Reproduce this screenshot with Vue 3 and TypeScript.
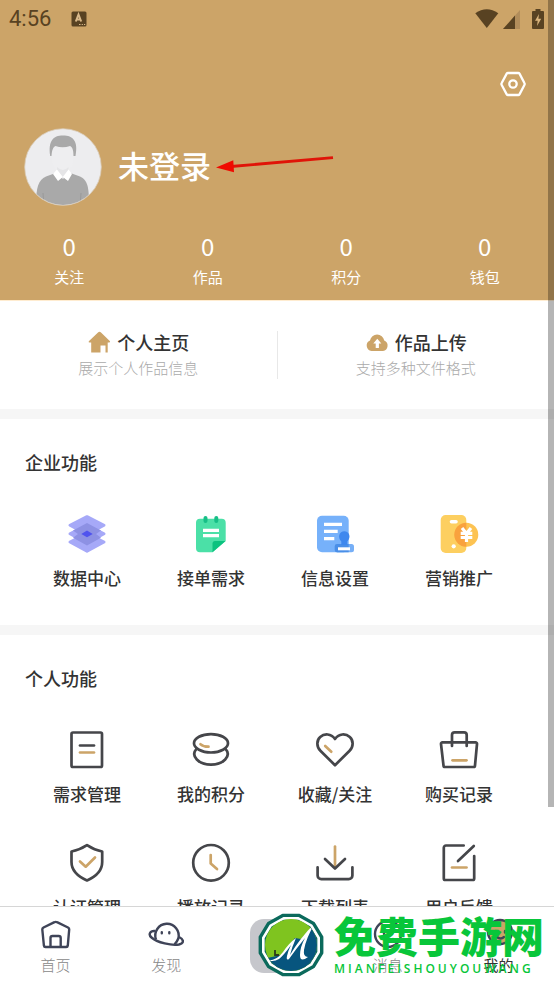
<script setup lang="ts">
interface Stat { value: number; label: string }
interface Shape { d: string; gold?: boolean }
interface Feature { label: string; shapes: Shape[] }

const stats: Stat[] = [
  { value: 0, label: '关注' },
  { value: 0, label: '作品' },
  { value: 0, label: '积分' },
  { value: 0, label: '钱包' },
]

const personal: Feature[] = [
  { label: '需求管理', shapes: [
    { d: 'M6 2.5H33.5a1.5 1.5 0 0 1 1.5 1.5V35.5a1.5 1.5 0 0 1-1.5 1.5H6a1.5 1.5 0 0 1-1.5-1.5V4A1.5 1.5 0 0 1 6 2.5z' },
    { d: 'M13 15.5H27' },
    { d: 'M13 22.5H27', gold: true },
  ] },
  { label: '我的积分', shapes: [
    { d: 'M3 13.3a17 9.2 0 1 0 34 0a17 9.2 0 1 0-34 0z' },
    { d: 'M5.5 18.8C-1 26 8 34.7 20 34.7S41 26 34.5 18.8' },
    { d: 'M9.5 14.2Q12.5 16.8 17.5 16.7', gold: true },
  ] },
  { label: '收藏/关注', shapes: [
    { d: 'M20 35.2L5.4 20.7C1.4 16.6 1.4 10.6 5.2 7.1C9.5 3.2 16 3.5 20 9C24 3.5 30.5 3.2 34.8 7.1C38.6 10.6 38.6 16.6 34.6 20.7z' },
    { d: 'M10.2 16L16.3 21.7', gold: true },
  ] },
  { label: '购买记录', shapes: [
    { d: 'M3.5 12.3H36.5a1.5 1.5 0 0 1 1.5 1.7L36 35.5a1.5 1.5 0 0 1-1.5 1.5H6a1.5 1.5 0 0 1-1.5-1.5L2 14a1.5 1.5 0 0 1 1.5-1.7z' },
    { d: 'M13 16V5a2.7 2.7 0 0 1 2.7-2.7H25A2.7 2.7 0 0 1 27.7 5V16' },
    { d: 'M13.5 30.3H27.5', gold: true },
  ] },
  { label: '认证管理', shapes: [
    { d: 'M20 2.2C15 5.5 10 7.5 4.5 8.5V19C4.5 27 11 33.5 20 37.5C29 33.5 35.2 27 35.2 19V8.5C29.5 7.5 25 5.5 20 2.2z' },
    { d: 'M13 18.5L18.7 23.7L28 14.5', gold: true },
  ] },
  { label: '播放记录', shapes: [
    { d: 'M2.2 19.8a17.8 17.8 0 1 0 35.6 0a17.8 17.8 0 1 0-35.6 0z' },
    { d: 'M19.7 12V20.5L26 26', gold: true },
  ] },
  { label: '下载列表', shapes: [
    { d: 'M20 3.5V24', gold: true },
    { d: 'M10 16L20 25.5L30 16' },
    { d: 'M2.6 24.3V32.5a3.7 3.7 0 0 0 3.7 3.7H33.7a3.7 3.7 0 0 0 3.7-3.7V24.3' },
  ] },
  { label: '用户反馈', shapes: [
    { d: 'M24.7 2.5H7A2.2 2.2 0 0 0 4.8 4.7V35.5A1.5 1.5 0 0 0 6.3 37H33.7A1.5 1.5 0 0 0 35.2 35.5V13' },
    { d: 'M34.8 3L19 18' },
    { d: 'M13 24.5H27.5', gold: true },
  ] },
]

/* Twelve-sided outline used by every ring of the round emblem. */
function ring(radius: number): string {
  return Array.from({ length: 12 }, (_, i) => {
    const a = ((i * 30 + 15) * Math.PI) / 180
    return `${(34 + radius * Math.cos(a)).toFixed(1)},${(33 + radius * 0.96 * Math.sin(a)).toFixed(1)}`
  }).join(' ')
}
</script>

<template>
  <div class="screen">
    <main class="content">
      <header class="hero">
        <div class="status">
          <span class="time">4:56</span>
          <svg class="keyboard" width="16" height="16" viewBox="0 0 16 16" aria-hidden="true">
            <rect x="0.5" y="0.5" width="15" height="15" rx="1.5" fill="#584222" />
            <path d="M4.8 10.5L7.5 3.5L10.2 10.5M5.7 8.5H9.3" fill="none" stroke="#d9b98a" stroke-width="2" />
            <path d="M8 13.5h1.5M10.7 13.5h1.2M13 13.5h1.2" stroke="#d9b98a" stroke-width="1.2" />
          </svg>
          <svg class="signals" width="70" height="22" viewBox="0 0 70 22" aria-hidden="true">
            <path d="M0.3 5.2Q11.7-2.5 23.3 5.2L11.8 20z" fill="#584222" />
            <path d="M45 2V21H28z" fill="#b18d5b" />
            <path d="M40 7.6V21H28z" fill="#584222" />
            <path d="M60.5 1H65.5V3H68a1 1 0 0 1 1 1V20a1 1 0 0 1-1 1H58a1 1 0 0 1-1-1V4a1 1 0 0 1 1-1h2.5z" fill="#584222" />
            <path d="M64 6L60 12.8H62.7L62 18L66.2 10.8H63.4z" fill="#d9b47c" />
          </svg>
        </div>

        <div class="tools">
          <button class="settings" type="button" aria-label="设置">
            <svg width="26" height="26" viewBox="0 0 26 26" fill="none" stroke="#fff" stroke-width="2.3">
              <path d="M8 2H18.2a1.5 1.5 0 0 1 1.3.7L24.4 12a2 2 0 0 1 0 2L19.5 23.3a1.5 1.5 0 0 1-1.3.7H8a1.5 1.5 0 0 1-1.3-.7L1.7 14a2 2 0 0 1 0-2L6.7 2.7A1.5 1.5 0 0 1 8 2z" />
              <circle cx="13" cy="13" r="3.7" />
            </svg>
          </button>
        </div>

        <div class="profile">
          <svg class="avatar" width="78" height="78" viewBox="0 0 78 78" aria-hidden="true">
            <defs><clipPath id="face"><circle cx="39" cy="39" r="38" /></clipPath></defs>
            <circle cx="39" cy="39" r="38.3" fill="#ededef" stroke="#d9cbb8" stroke-width="0.8" />
            <g clip-path="url(#face)">
              <path d="M12 78C12 60 14 52 22 48.5L33 44.5H45L56 48.5C64 52 65 60 65 78z" fill="#a9a9a9" />
              <path d="M20 78L19 65M56 78L57 65" stroke="#8f8f8f" stroke-width="0.6" />
              <path d="M28 22V32C29 42 35 46 38.5 46S48 42 49.5 32V22Q39 15 28 22z" fill="#eeeef0" />
              <path d="M33 39V46L39 51L44.5 46V39Q39 45 33 39z" fill="#e5e5e7" />
              <path d="M33 41.5L38.800 49L34 53L29 46zM44.500 41.500L38.800 49L44 53L48 46z" fill="#fff" />
              <path d="M26.200 28C24 13 29 7.500 39 7.500S54.500 13 51.500 28L49.500 28C49.500 22 48.500 19 46 18Q38.500 20.500 31.500 18C29 19 28 22 27.500 28z" fill="#a9a9a9" />
            </g>
          </svg>
          <button class="name" type="button">未登录</button>
          <svg class="pointer" width="120" height="24" viewBox="0 0 120 24" aria-hidden="true">
            <path d="M15 11.500L117 2.700" stroke="#e01408" stroke-width="2.800" />
            <path d="M0 12.500L17.300 5.300L18 17.200z" fill="#f00a00" />
          </svg>
        </div>

        <ul class="stats">
          <li v-for="s in stats" :key="s.label">
            <strong>{{ s.value }}</strong>
            <span>{{ s.label }}</span>
          </li>
        </ul>
      </header>

      <section class="shortcuts">
        <a class="shortcut" href="#home">
          <span class="shortcut-title">
            <svg width="24" height="24" viewBox="0 0 24 24" aria-hidden="true">
              <path d="M12.500 1.700Q13.300 1.700 14 2.400L23 11.200Q23.400 12.500 22 12.500H20.700V22.500H18.500V15.500H13.500V22.500H4.200V12.500H2.500Q1.200 12.500 1.800 11.200L11 2.400Q11.700 1.700 12.500 1.700z" fill="#cca468" />
            </svg>
            个人主页
          </span>
          <span class="shortcut-note">展示个人作品信息</span>
        </a>
        <a class="shortcut" href="#upload">
          <span class="shortcut-title">
            <svg width="24" height="24" viewBox="0 0 24 24" aria-hidden="true">
              <path d="M6.500 21A5.500 5.500 0 0 1 5 10.500A7.200 7.200 0 0 1 19.200 10.500A5.500 5.500 0 0 1 18 21z" fill="#cca468" />
              <path d="M12.300 8.700L16.300 13.500H13.900V18H10.700V13.500H8.300z" fill="#fff" />
            </svg>
            作品上传
          </span>
          <span class="shortcut-note">支持多种文件格式</span>
        </a>
      </section>

      <section class="panel">
        <h2>企业功能</h2>
        <div class="grid">
          <button type="button">
            <svg width="40" height="40" viewBox="0 0 40 40" aria-hidden="true">
              <g fill="#a6a9f8" stroke="#a6a9f8" stroke-width="3" stroke-linejoin="round">
                <path d="M20 2.700L37 11.300L20 20.500L3 11.300z" />
                <path d="M20 11L37 19.800L20 29L3 19.800z" />
                <path d="M20 19.500L37 28L20 37.200L3 28z" />
              </g>
              <path d="M20 9L34 16.500L29 20L34 23.800L20 31.500L6 23.800L11 20L6 16.500z" fill="#8d91e4" />
              <path d="M20 16.500L25.700 20L20 23.300L14.300 20z" fill="#5053ee" />
            </svg>
            数据中心
          </button>
          <button type="button">
            <svg width="40" height="40" viewBox="0 0 40 40" aria-hidden="true">
              <path d="M9 4.700H30.700a4 4 0 0 1 4 4V27L21.500 38.300H9a4 4 0 0 1-4-4V8.700a4 4 0 0 1 4-4z" fill="#4be0a7" />
              <path d="M34.500 27L21.500 38.300V29.500a2.500 2.500 0 0 1 2.500-2.500z" fill="#0cc27f" />
              <path d="M14.500 4V7M25.300 4V7" stroke="#17bf87" stroke-width="4" stroke-linecap="round" />
              <path d="M12 16.300H28M12 21.700H28" stroke="#fff" stroke-width="3.200" />
            </svg>
            接单需求
          </button>
          <button type="button">
            <svg width="40" height="40" viewBox="0 0 40 40" aria-hidden="true">
              <rect x="2" y="1.700" width="31.700" height="36.600" rx="5" fill="#76b1fa" />
              <path d="M9 10.300H27M9 17.300H22.700M9 24.700H19.300" stroke="#fff" stroke-width="3.200" />
              <rect x="19.700" y="30" width="19.300" height="8.300" rx="2.500" fill="#76aff7" />
              <path d="M22 30H33.700V38.300H22a2.300 2.300 0 0 1-2.300-2.300V32.300A2.300 2.300 0 0 1 22 30z" fill="#4a8fe8" />
              <path d="M26.300 31V27.500C22 23 24.500 17.300 29.300 17.300S36.600 23 32.300 27.500V31z" fill="#3f88ee" />
              <path d="M23 34.800H35" stroke="#fff" stroke-width="3" />
            </svg>
            信息设置
          </button>
          <button type="button">
            <svg width="40" height="40" viewBox="0 0 40 40" aria-hidden="true">
              <defs><clipPath id="phone"><rect x="1.700" y="1" width="25.600" height="38" rx="5" /></clipPath></defs>
              <rect x="1.700" y="1" width="25.600" height="38" rx="5" fill="#fdcf60" />
              <circle cx="27.300" cy="20.700" r="12" fill="#fdc352" />
              <circle cx="27.300" cy="20.700" r="12" fill="#f9a23e" clip-path="url(#phone)" />
              <path d="M12.500 7.700H17" stroke="#fff" stroke-width="3.600" stroke-linecap="round" />
              <circle cx="14.700" cy="32.300" r="2.100" fill="#fff" />
              <path d="M23 14L27.500 19.500L32 14M21.700 19.300H33.300M21.700 23.500H33.300M27.500 19V28" fill="none" stroke="#fff" stroke-width="3.200" />
            </svg>
            营销推广
          </button>
        </div>
      </section>

      <section class="panel">
        <h2>个人功能</h2>
        <div class="grid">
          <button v-for="f in personal" :key="f.label" type="button">
            <svg class="line-icon" width="40" height="40" viewBox="0 0 40 40" aria-hidden="true">
              <path v-for="s in f.shapes" :key="s.d" :d="s.d" :class="{ gold: s.gold }" />
            </svg>
            {{ f.label }}
          </button>
        </div>
      </section>
    </main>

    <div class="scroll-thumb" aria-hidden="true"></div>

    <nav class="tabs">
      <a href="#index">
        <svg class="tab-icon" width="36" height="36" viewBox="0 0 36 36" aria-hidden="true">
          <path d="M17.500 5.200Q18.700 4.500 20 5.200L31 10.500Q32.300 11.200 32.200 12.500L30.800 28.500Q30.600 30 29.200 30H8.500Q7.100 30 6.900 28.500L5.300 12.500Q5.200 11.200 6.500 10.500z" />
          <path d="M13.500 30V21a2 2 0 0 1 2-2H21.700a2 2 0 0 1 2 2V30" />
        </svg>
        首页
      </a>
      <a href="#discover">
        <svg class="tab-icon" width="36" height="36" viewBox="0 0 36 36" aria-hidden="true">
          <path d="M8 22.500A11.700 11.700 0 1 1 30.300 21.500Q29 25 26.500 27.300" />
          <path d="M7 14C2 13.500 0 17.500 3.500 20.500C9 25.500 24 29 31 27.500C36.500 26 36 22.500 31 20" />
          <path d="M13.800 15.200V16.200M21.300 15.200V16.200" stroke-linecap="round" />
        </svg>
        发现
      </a>
      <button class="publish" type="button" aria-label="发布">
        <svg width="54" height="54" viewBox="0 0 54 54" aria-hidden="true" />
      </button>
      <a href="#messages">
        <svg class="tab-icon" width="36" height="36" viewBox="0 0 36 36" aria-hidden="true">
          <circle cx="18" cy="17" r="13" />
          <path d="M14 15V17M22 15V17M13 22Q18 26 23 22" stroke-linecap="round" />
        </svg>
        消息
      </a>
      <a class="active" href="#me" aria-current="page">
        <svg class="tab-icon" width="36" height="36" viewBox="0 0 36 36" aria-hidden="true">
          <circle cx="19" cy="15" r="12" fill="#cca468" />
          <path d="M15 14V15.500M24 14V15.500M16 20Q19.500 23 23 20" stroke-linecap="round" />
        </svg>
        我的
      </a>
    </nav>

    <div class="brand">
      <svg width="68" height="66" viewBox="0 0 68 66" aria-hidden="true">
        <defs><clipPath id="disc"><circle cx="34" cy="33" r="26" /></clipPath></defs>
        <polygon :points="ring(32)" fill="#0b6a5c" stroke="#0b6a5c" stroke-width="3" stroke-linejoin="round" />
        <polygon :points="ring(29)" fill="#fff" stroke="#fff" stroke-width="2" stroke-linejoin="round" />
        <polygon :points="ring(26.5)" fill="#0b6a5c" stroke="#0b6a5c" stroke-width="1.5" stroke-linejoin="round" />
        <g clip-path="url(#disc)">
          <rect width="68" height="66" fill="#7fc41f" />
          <path d="M68 8L58 11L44 27L38 26L24 43L6 47V66H68z" fill="#07557e" />
          <path d="M12 48.500Q20 48 26 40Q32 31 39 26Q35 35 33 43Q43 26 58 11Q49 26 47 38Q46 45 51 45Q43 51 43 43Q43 35 48 26Q39 37 32 47Q29 49 30 44Q31 39 34 33Q27 43 22 47Q17 50 12 48.500z" fill="#fff" />
          <path d="M18 38V43H22" fill="none" stroke="#2c3a1c" stroke-width="1.800" />
        </g>
      </svg>
      <div class="brand-text">
        <strong>免费手游网</strong>
        <span>MIANFEISHOUYOUWANG</span>
      </div>
    </div>
  </div>
</template>

<style>
body {
  background: #fff;
}
</style>

<style scoped>
.screen {
  position: relative;
  display: flex;
  flex-direction: column;
  height: 100vh;
  overflow: hidden;
  background: #fff;
  color: #333;
  font-family: "Noto Sans CJK SC", sans-serif;
}

.screen * {
  box-sizing: border-box;
}

.screen svg {
  display: block;
  flex: none;
}

button {
  padding: 0;
  border: 0;
  background: none;
  color: inherit;
  font: inherit;
  cursor: pointer;
}

a {
  color: inherit;
  text-decoration: none;
}

.content {
  flex: 1;
  min-height: 0;
  overflow-y: auto;
  scrollbar-width: none;
}

.hero {
  padding-bottom: 12px;
  background: #cca468;
  color: #fff;
}

.status {
  display: flex;
  align-items: center;
  height: 38px;
  padding: 0 9px;
  color: #584222;
}

.time {
  font: 400 22px/24px Roboto, sans-serif;
}

.keyboard {
  margin-left: 20px;
}

.signals {
  margin-left: auto;
}

.tools {
  display: flex;
  justify-content: flex-end;
  padding: 33px 28px 31px;
}

.profile {
  display: flex;
  align-items: center;
  padding: 0 24px;
}

.name {
  margin: 0 5px 0 16px;
  padding-bottom: 4px;
  font-size: 31px;
  font-weight: 500;
  line-height: 40px;
}

.stats {
  display: grid;
  grid-template-columns: repeat(4, 1fr);
  margin: 26px 0 0;
  padding: 0;
  list-style: none;
  text-align: center;
}

.stats li {
  display: grid;
  gap: 6px;
}

.stats strong {
  font-size: 24px;
  font-weight: 400;
  line-height: 28px;
}

.stats span {
  font-size: 15px;
  line-height: 22px;
}

.shortcuts {
  display: flex;
  padding: 30px 0;
  border-top: 1px solid #ffecd0;
  border-bottom: 10px solid #f6f6f6;
}

.shortcut {
  display: grid;
  flex: 1;
  gap: 3px;
  justify-items: center;
  align-content: start;
  height: 48px;
}

.shortcut + .shortcut {
  border-left: 1px solid #e8e8e8;
}

.shortcut-title {
  display: flex;
  align-items: center;
  gap: 6px;
  height: 22px;
  font-size: 18px;
  font-weight: 500;
  line-height: 22px;
}

.shortcut-note {
  color: #aaa;
  font-size: 15px;
  font-weight: 300;
  line-height: 24px;
}

.panel {
  padding: 31px 33px 35px 25px;
  border-bottom: 10px solid #f6f6f6;
}

h2 {
  margin: 0 0 40px;
  font-size: 18px;
  font-weight: 500;
  line-height: 24px;
}

.grid {
  display: grid;
  grid-template-columns: repeat(4, 1fr);
  row-gap: 37px;
}

.grid button {
  display: grid;
  justify-items: center;
  gap: 12px;
  font-size: 17px;
  font-weight: 500;
  line-height: 24px;
}

.line-icon {
  fill: none;
  stroke: #45464a;
  stroke-width: 2.7;
  stroke-linecap: round;
  stroke-linejoin: round;
}

.line-icon .gold {
  stroke: #cca468;
}

.scroll-thumb {
  position: absolute;
  top: 0;
  right: 0;
  width: 6px;
  height: 82%;
  background: rgba(0, 0, 0, 0.29);
}

.tabs {
  display: grid;
  grid-template-columns: repeat(5, 1fr);
  padding: 10px 0 8px;
  border-top: 1px solid #d6d6d6;
  background: #fff;
  color: #888;
  font-size: 15px;
  font-weight: 300;
  line-height: 22px;
}

.tabs a {
  display: grid;
  justify-items: center;
  gap: 1px;
}

.tabs .active {
  color: #333;
  font-weight: 400;
}

.tab-icon {
  fill: none;
  stroke: #3f4458;
  stroke-width: 2.4;
  stroke-linejoin: round;
}

.publish {
  place-self: start center;
  margin-top: 2px;
  border-radius: 14px;
  background: #c6c7cc;
}

.brand {
  position: absolute;
  right: 11px;
  bottom: 6px;
  display: flex;
  align-items: center;
  gap: 9px;
  color: #08c63a;
  pointer-events: none;
}

.brand-text {
  display: grid;
  gap: 4px;
  width: 209px;
}

.brand-text strong {
  font-size: 42px;
  font-weight: 900;
  line-height: 44px;
  white-space: nowrap;
}

.brand-text span {
  font-family: "Open Sans", sans-serif;
  font-size: 12px;
  font-weight: 600;
  line-height: 16px;
  letter-spacing: 3px;
}
</style>
